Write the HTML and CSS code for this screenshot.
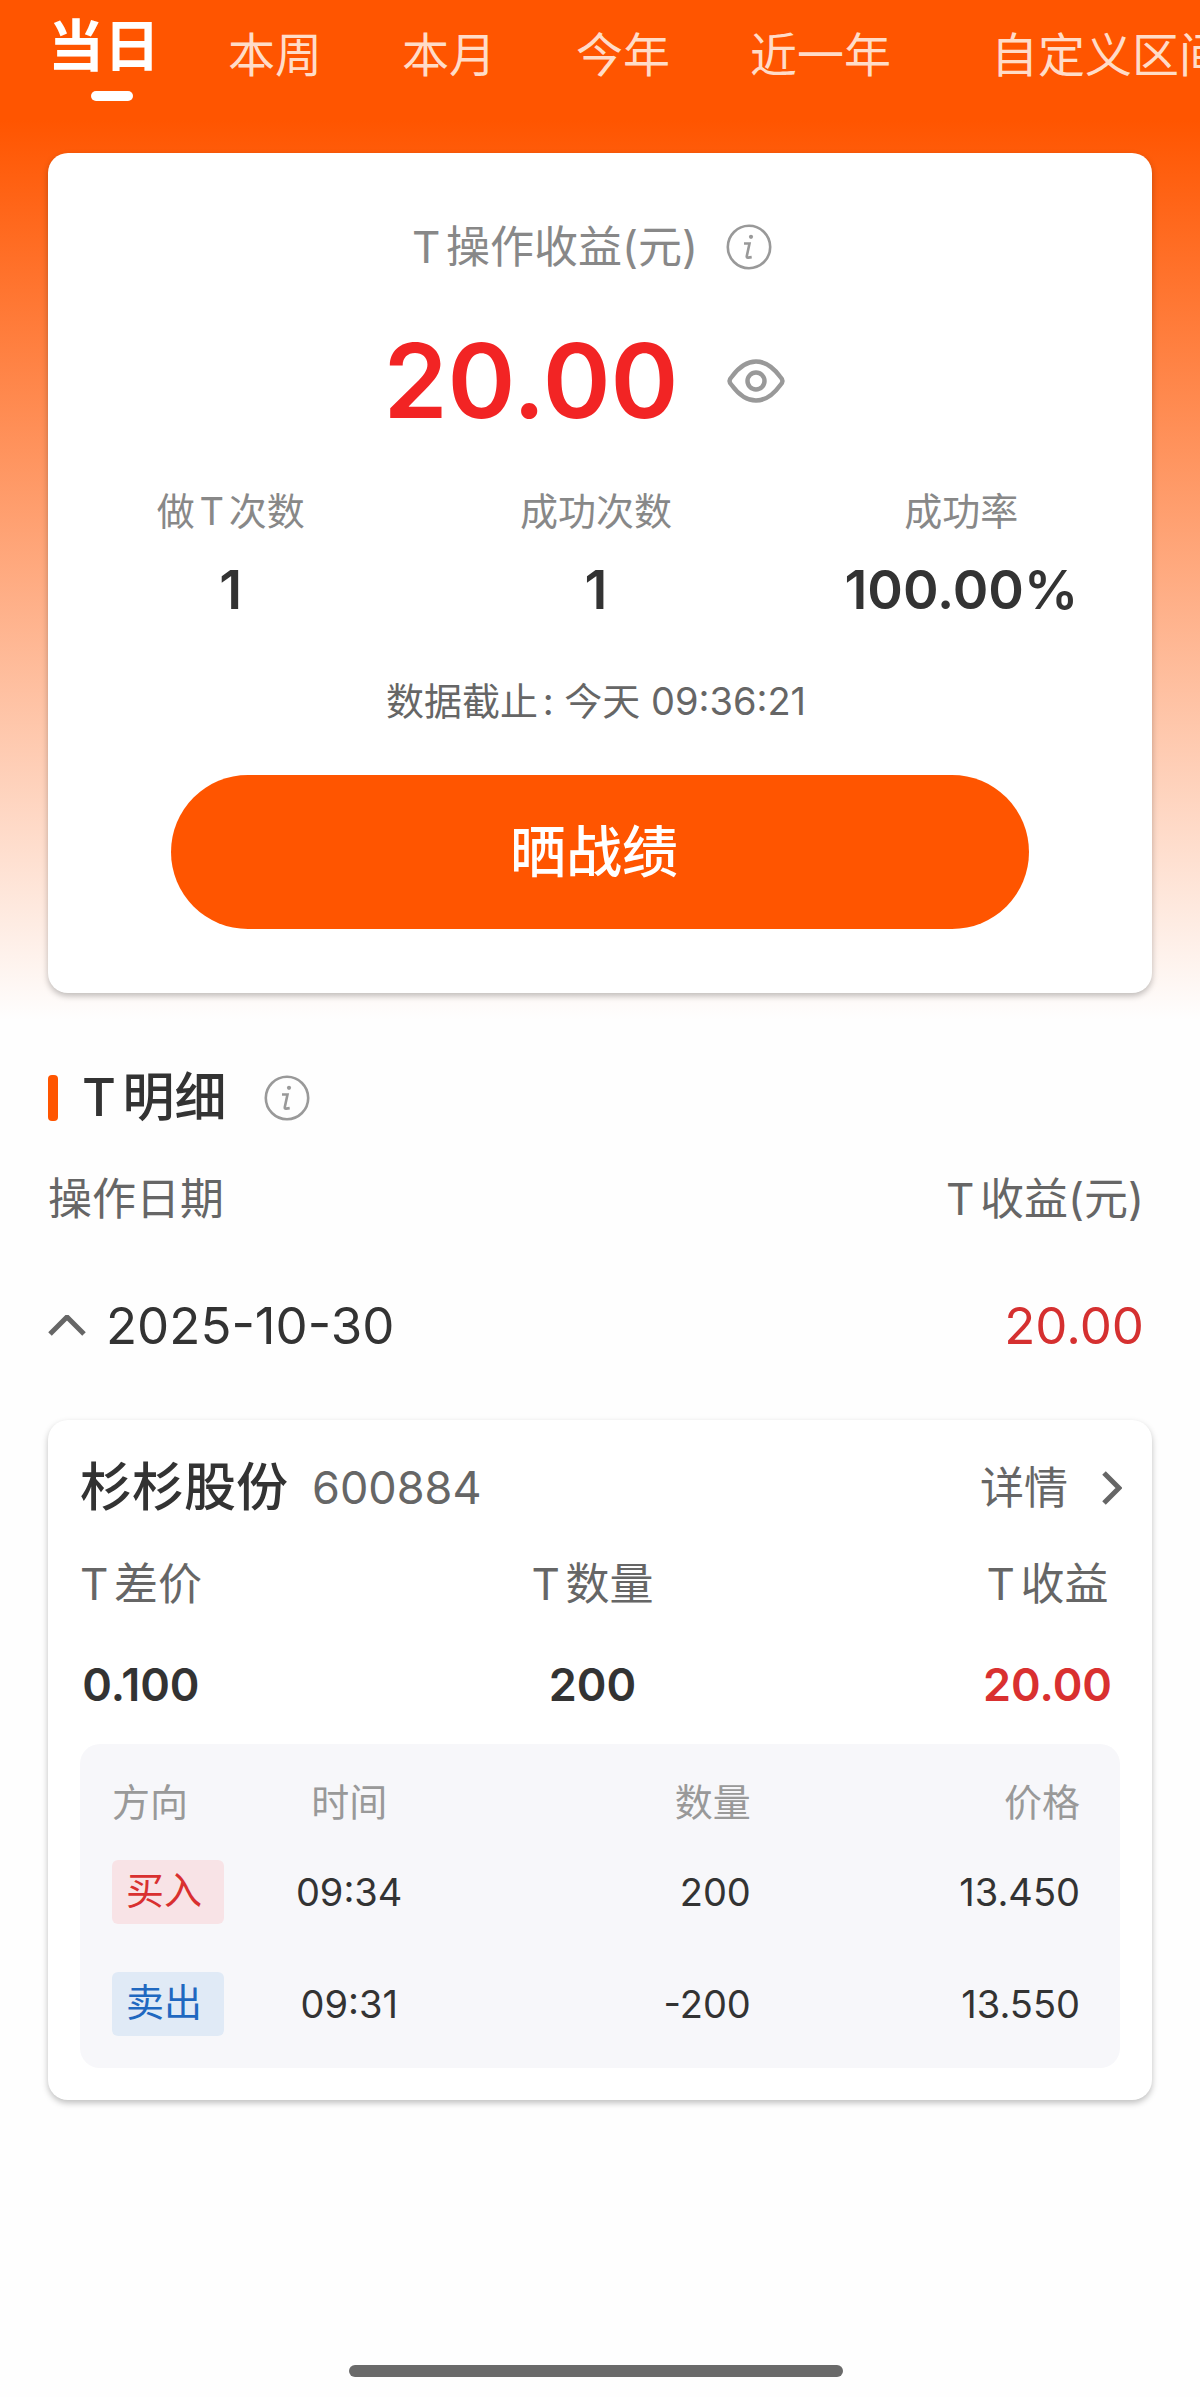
FILE: index.html
```html
<!DOCTYPE html>
<html lang="zh-CN">
<head>
<meta charset="utf-8">
<meta name="viewport" content="width=device-width, initial-scale=1">
<title>T操作收益</title>
<link rel="stylesheet" href="styles.css">
</head>
<body>
<div class="page">
  <nav class="tabs">
    <button class="tab tab-active" type="button" aria-current="true">当日</button>
    <button class="tab" type="button">本周</button>
    <button class="tab" type="button">本月</button>
    <button class="tab" type="button">今年</button>
    <button class="tab" type="button">近一年</button>
    <button class="tab tab-custom" type="button">自定义区间</button>
  </nav>

  <main class="content">
    <section class="card summary">
      <div class="summary-title">
        <span>T操作收益(元)</span>
        <button class="icon-button" type="button" aria-label="收益说明">
          <svg class="info" viewBox="0 0 46 46" aria-hidden="true">
            <circle cx="23" cy="23" r="21.2"/>
            <path d="M18 19.5h5.500l-2.700 12.500q-.4 1.800 1.400 1.600l3.500-.5"/>
            <circle class="info-dot" cx="25" cy="12.800" r="2.100"/>
          </svg>
        </button>
      </div>
      <div class="summary-amount">
        <strong class="amount">20.00</strong>
        <button class="icon-button" type="button" aria-label="隐藏金额">
          <svg class="eye" viewBox="0 0 58 44" aria-hidden="true">
            <path d="M2.500 22Q2.500 20 5 17.500Q16 2.500 29 2.500T53 17.500Q55.500 20 55.500 22T53 26.500Q42 41.500 29 41.500T5 26.500Q2.500 24 2.500 22Z"/>
            <circle cx="29" cy="22" r="8.500"/>
          </svg>
        </button>
      </div>
      <dl class="stats">
        <div class="stat"><dt>做T次数</dt><dd>1</dd></div>
        <div class="stat"><dt>成功次数</dt><dd>1</dd></div>
        <div class="stat"><dt>成功率</dt><dd>100.00%</dd></div>
      </dl>
      <p class="updated">数据截止: 今天 09:36:21</p>
      <button class="share" type="button">晒战绩</button>
    </section>

    <section class="details">
      <div class="section-head">
        <h2 class="section-title">T明细</h2>
        <button class="icon-button" type="button" aria-label="明细说明">
          <svg class="info" viewBox="0 0 46 46" aria-hidden="true">
            <circle cx="23" cy="23" r="21.2"/>
            <path d="M18 19.5h5.500l-2.700 12.500q-.4 1.800 1.400 1.600l3.500-.5"/>
            <circle class="info-dot" cx="25" cy="12.800" r="2.100"/>
          </svg>
        </button>
      </div>
      <div class="list-head">
        <span>操作日期</span>
        <span>T收益(元)</span>
      </div>
      <button class="day" type="button" aria-expanded="true">
        <svg class="chevron-up" viewBox="0 0 38 22" aria-hidden="true"><path d="M2 19L19 2L36 19"/></svg>
        <span class="day-date">2025-10-30</span>
        <span class="day-profit">20.00</span>
      </button>

      <article class="card stock">
        <header class="stock-head">
          <h3 class="stock-name">杉杉股份</h3>
          <span class="stock-code">600884</span>
          <a class="stock-link" href="#detail">详情
            <svg class="chevron-right" viewBox="0 0 20 34" aria-hidden="true"><path d="M2 2L17 17L2 32"/></svg>
          </a>
        </header>
        <dl class="metrics">
          <div class="metric"><dt>T差价</dt><dd>0.100</dd></div>
          <div class="metric"><dt>T数量</dt><dd>200</dd></div>
          <div class="metric"><dt>T收益</dt><dd class="profit">20.00</dd></div>
        </dl>
        <div class="trades">
          <table class="trade-table">
            <thead>
              <tr>
                <th class="col-side" scope="col">方向</th>
                <th class="col-time" scope="col">时间</th>
                <th class="col-count" scope="col">数量</th>
                <th class="col-price" scope="col">价格</th>
              </tr>
            </thead>
            <tbody>
              <tr>
                <td class="col-side"><span class="badge badge-buy">买入</span></td>
                <td class="col-time">09:34</td>
                <td class="col-count">200</td>
                <td class="col-price">13.450</td>
              </tr>
              <tr>
                <td class="col-side"><span class="badge badge-sell">卖出</span></td>
                <td class="col-time">09:31</td>
                <td class="col-count">-200</td>
                <td class="col-price">13.550</td>
              </tr>
            </tbody>
          </table>
        </div>
      </article>
    </section>
  </main>
  <div class="home-bar"></div>
</div>
</body>
</html>
```
FILE: styles.css
```css
* {
  box-sizing: border-box;
}

body {
  margin: 0;
  background: #fefefe;
  color: #333;
  font-family: Inter, "Noto Sans CJK SC", sans-serif;
  text-autospace: normal;
}

h2, h3, p, dl, dd {
  margin: 0;
}

button {
  padding: 0;
  border: 0;
  background: none;
  color: inherit;
  font: inherit;
  cursor: pointer;
}

svg {
  display: block;
  fill: none;
}

.page {
  display: flex;
  flex-direction: column;
  min-height: 100vh;
  padding-bottom: 20px;
  background: linear-gradient(#ff5500 0, #ff5500 120px, #fefefe 1020px);
}

/* Period tabs */
.tabs {
  display: flex;
  align-items: flex-start;
  gap: 80px;
  height: 153px;
  padding-left: 48px;
  overflow-x: auto;
  scrollbar-width: none;
}

.tab {
  flex: none;
  padding-top: 25px;
  color: #ffdcc8;
  font-size: 47px;
  line-height: 60px;
}

.tab-active {
  display: flex;
  flex-direction: column;
  align-items: center;
  gap: 15px;
  margin-right: -12px;
  padding-top: 16px;
  color: #fff;
  font-size: 56px;
  font-weight: 700;
}

.tab-active::after {
  width: 42px;
  height: 10px;
  margin-left: 16px;
  border-radius: 5px;
  background: #fff;
  content: "";
}

.tab-custom {
  margin-left: 20px;
}

.content {
  padding: 0 48px;
}

.card {
  border-radius: 20px;
  background: #fff;
  box-shadow: 0 3px 6px rgba(0, 0, 0, 0.25);
}

/* Summary card */
.summary {
  display: flex;
  flex-direction: column;
  padding: 64px 0;
}

.summary-title {
  display: flex;
  justify-content: center;
  align-items: center;
  gap: 28px;
  padding-right: 16px;
  color: #888;
  font-size: 44px;
  line-height: 60px;
}

.info {
  width: 46px;
  height: 46px;
  stroke: #999;
  stroke-width: 2.6;
}

.info-dot {
  fill: #999;
  stroke: none;
}

.summary-amount {
  display: flex;
  justify-content: center;
  align-items: center;
  gap: 48px;
  margin-top: 44px;
  padding-right: 32px;
}

.amount {
  color: #f22424;
  font-size: 103px;
  font-weight: 600;
  line-height: 120px;
}

.eye {
  width: 58px;
  height: 44px;
  stroke: #999;
  stroke-width: 4.5;
}

.stats {
  display: grid;
  grid-template-columns: repeat(3, 1fr);
  margin-top: 46px;
  padding-right: 8px;
  text-align: center;
}

.stat dt {
  color: #888;
  font-size: 38px;
  line-height: 48px;
}

.stat dd {
  margin-top: 23px;
  font-size: 54px;
  font-weight: 600;
  line-height: 64px;
}

.updated {
  margin-top: 55px;
  padding-right: 8px;
  color: #666;
  font-size: 38px;
  line-height: 48px;
  text-align: center;
}

.share {
  height: 154px;
  margin: 50px 123px 0;
  padding-right: 12px;
  border-radius: 77px;
  background: #ff5500;
  color: #fff;
  font-size: 56px;
  font-weight: 500;
  line-height: 64px;
}

/* Detail list */
.section-head {
  display: flex;
  align-items: center;
  gap: 38px;
  margin-top: 75px;
}

.section-title {
  display: flex;
  align-items: center;
  gap: 24px;
  font-size: 52px;
  font-weight: 500;
  line-height: 60px;
}

.section-title::before {
  width: 10px;
  height: 46px;
  border-radius: 4px;
  background: #ff5500;
  content: "";
}

.list-head {
  display: flex;
  justify-content: space-between;
  margin-top: 41px;
  padding-right: 8px;
  color: #666;
  font-size: 44px;
  line-height: 60px;
}

.day {
  display: flex;
  align-items: center;
  width: 100%;
  margin-top: 65px;
  padding-right: 8px;
  font-size: 51px;
  line-height: 64px;
}

.chevron-up {
  width: 38px;
  height: 22px;
  margin-right: 20px;
  stroke: #666;
  stroke-width: 5;
}

.day-profit {
  margin-left: auto;
  color: #d53030;
}

/* Stock card */
.stock {
  margin-top: 62px;
  padding: 36px 30px 32px 32px;
}

.stock-head {
  display: flex;
  align-items: center;
  line-height: 64px;
}

.stock-name {
  font-size: 52px;
  font-weight: 500;
}

.stock-code {
  margin-left: 24px;
  color: #666;
  font-size: 45px;
}

.stock-link {
  display: flex;
  align-items: center;
  gap: 34px;
  margin-left: auto;
  color: #666;
  font-size: 44px;
  text-decoration: none;
}

.chevron-right {
  width: 20px;
  height: 34px;
  stroke: #666;
  stroke-width: 5;
}

.metrics {
  display: flex;
  justify-content: space-between;
  margin-top: 34px;
  padding-right: 10px;
  text-align: center;
}

.metric dt {
  color: #666;
  font-size: 44px;
  line-height: 60px;
}

.metric dd {
  margin-top: 41px;
  font-size: 45px;
  font-weight: 600;
  line-height: 60px;
}

.metric .profit {
  color: #d93030;
}

.trades {
  margin-top: 29px;
  margin-right: 2px;
  padding: 24px 40px 8px 32px;
  border-radius: 20px;
  background: #f7f7fa;
}

.trade-table {
  width: 100%;
  border-collapse: collapse;
  table-layout: fixed;
}

.trade-table th {
  height: 68px;
  padding: 0;
  color: #999;
  font-size: 38px;
  font-weight: 400;
  line-height: 48px;
}

.trade-table td {
  height: 112px;
  padding: 0;
  font-size: 38px;
  line-height: 48px;
}

.trade-table .col-side {
  width: 13%;
  text-align: left;
}

.trade-table .col-time {
  width: 23%;
  text-align: center;
}

.trade-table .col-count {
  width: 30%;
  text-align: right;
}

.trade-table .col-price {
  text-align: right;
}

.trade-table .badge {
  display: block;
  width: 112px;
  height: 64px;
  padding-left: 14px;
  border-radius: 6px;
  line-height: 60px;
}

.badge-buy {
  background: #f8e3e6;
  color: #d93030;
}

.badge-sell {
  background: #e0eaf6;
  color: #1f68c0;
}

.home-bar {
  align-self: center;
  width: 494px;
  height: 12px;
  margin-top: auto;
  margin-right: 8px;
  border-radius: 6px;
  background: #6a6a6a;
}
```
